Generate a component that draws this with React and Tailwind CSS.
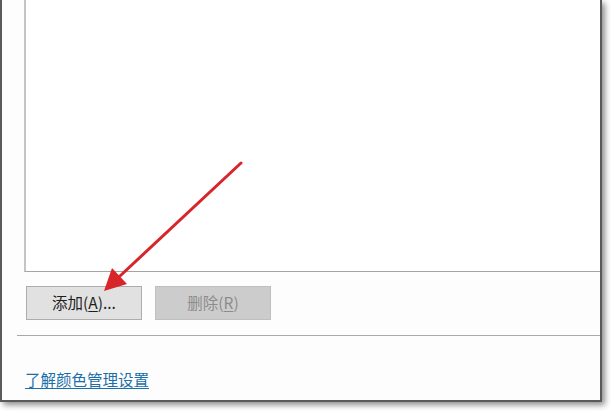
const font = { fontFamily: '"Segoe UI", "Noto Sans CJK SC", "Liberation Sans", sans-serif' };

const App = () => {
  return (
    <div className="relative w-[611px] h-[411px] bg-white overflow-hidden" style={font}>
      {/* Dialog window */}
      <div className="flex flex-col w-[602px] h-[402px] bg-[#fdfdfd] border-l-2 border-r-2 border-b-2 border-[#5a5a5a] shadow-[3px_3px_6px_rgba(0,0,0,0.45)]">
        {/* List box */}
        <div className="ml-[22px] h-[272px] shrink-0 bg-white border-l-2 border-l-[#c4c4c4] border-b border-b-[#a3a3a3]" />

        {/* Buttons */}
        <div className="flex gap-[13px] ml-[24px] mt-[14px]">
          <button className="w-[116px] h-[34px] bg-[#e1e1e1] border border-[#adadad] text-[15.5px] text-[#1e1e1e]">
            添加(<span className="underline underline-offset-2">A</span>)...
          </button>
          <button className="w-[116px] h-[34px] bg-[#cccccc] border border-[#bfbfbf] text-[15.5px] text-[#8c8c8c]">
            删除(<span className="underline underline-offset-2">R</span>)
          </button>
        </div>

        {/* Separator */}
        <div className="ml-[15px] mt-[15px] border-t border-[#a8a8a8]" />

        {/* Link */}
        <div className="ml-[23px] mt-[31px]">
          <a href="#" className="text-[15.5px] leading-5 text-[#1b6ea8] underline underline-offset-2">
            了解颜色管理设置
          </a>
        </div>
      </div>

      {/* Red annotation arrow */}
      <svg className="absolute left-0 top-0 pointer-events-none" width="611" height="411">
        <line x1="241" y1="163" x2="120" y2="276" stroke="#d7252a" strokeWidth="3" strokeLinecap="round" />
        <polygon points="104,291 112,268 127,284" fill="#d7252a" />
      </svg>
    </div>
  );
};

export default App;
